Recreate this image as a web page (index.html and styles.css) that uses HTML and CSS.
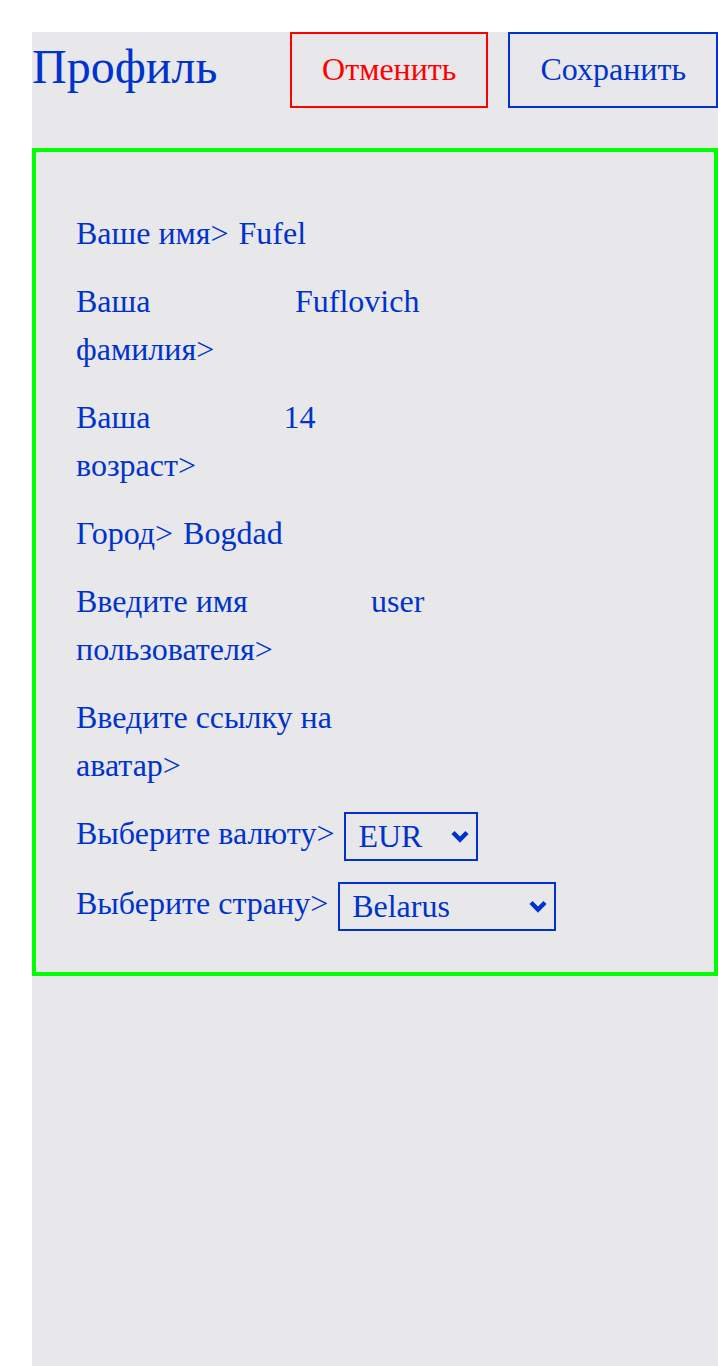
FILE: index.html
```html
<!DOCTYPE html>
<html lang="ru">
<head>
<meta charset="utf-8">
<title>Профиль</title>
<link rel="stylesheet" href="styles.css">
</head>
<body>
<div class="page">
  <header class="header">
    <h1 class="title">Профиль</h1>
    <div class="actions">
      <button class="btn btn-cancel" type="button">Отменить</button>
      <button class="btn btn-save" type="button">Сохранить</button>
    </div>
  </header>
  <form class="profile">
    <div class="row"><span class="label">Ваше имя&gt;</span><span class="value">Fufel</span></div>
    <div class="row"><span class="label">Ваша фамилия&gt;</span><span class="value">Fuflovich</span></div>
    <div class="row"><span class="label">Ваша возраст&gt;</span><span class="value">14</span></div>
    <div class="row"><span class="label">Город&gt;</span><span class="value">Bogdad</span></div>
    <div class="row"><span class="label">Введите имя пользователя&gt;</span><span class="value">user</span></div>
    <div class="row"><span class="label">Введите ссылку на аватар&gt;</span><span class="value"></span></div>
    <div class="row"><span class="label">Выберите валюту&gt;</span>
      <span class="select-wrap">
        <select class="select select-currency">
          <option>EUR</option>
          <option>USD</option>
          <option>RUB</option>
        </select>
        <svg class="chevron" viewBox="0 0 18 13" width="18" height="13" aria-hidden="true"><polyline points="2,2.5 9,9.5 16,2.5" fill="none" stroke="currentColor" stroke-width="4.5"/></svg>
      </span>
    </div>
    <div class="row row-last"><span class="label">Выберите страну&gt;</span>
      <span class="select-wrap">
        <select class="select select-country">
          <option>Belarus</option>
          <option>Russia</option>
          <option>Ukraine</option>
        </select>
        <svg class="chevron" viewBox="0 0 18 13" width="18" height="13" aria-hidden="true"><polyline points="2,2.5 9,9.5 16,2.5" fill="none" stroke="currentColor" stroke-width="4.5"/></svg>
      </span>
    </div>
  </form>
</div>
</body>
</html>
```
FILE: styles.css
```css
html, body {
  margin: 0;
  padding: 0;
  background: #ffffff;
}

body {
  font-family: "Liberation Serif", "Times New Roman", serif;
  color: #0033cc;
}

.page {
  margin: 32px 0 0 32px;
  background: #e8e8eb;
  min-height: calc(100vh - 32px);
}

.header {
  display: flex;
  justify-content: space-between;
  align-items: flex-start;
  margin-bottom: 40px;
}

.title {
  margin: 0;
  padding-top: 7px;
  font-size: 48px;
  font-weight: normal;
  line-height: normal;
  color: #0033cc;
}

.actions {
  display: flex;
  gap: 20px;
}

.btn {
  font-family: "Liberation Serif", "Times New Roman", serif;
  font-size: 32px;
  line-height: 38px;
  padding: 16px 30px 18px;
  background: transparent;
  border: 2px solid;
  border-radius: 0;
  margin: 0;
}

.btn-cancel {
  color: #ff0000;
  border-color: #ff0000;
}

.btn-save {
  color: #0033cc;
  border-color: #0033cc;
}

.profile {
  border: 4px solid #00ff00;
  padding: 57px 40px 44px;
  display: flex;
  flex-direction: column;
  gap: 20px;
  font-size: 32px;
  line-height: 48px;
}

.row {
  display: flex;
  align-items: flex-start;
  gap: 10px;
}

.row-last {
  margin-top: 1px;
}

.label {
  flex: 0 1 auto;
}

.value {
  flex: 0 1 400px;
}

.select-wrap {
  position: relative;
  display: block;
  flex: none;
  margin: 3px 0 -3px;
  height: 49px;
  color: #0033cc;
}

.select {
  display: block;
  appearance: none;
  -webkit-appearance: none;
  font-family: "Liberation Serif", "Times New Roman", serif;
  font-size: 32px;
  line-height: normal;
  color: #0033cc;
  background-color: transparent;
  border: 2px solid #0033cc;
  border-radius: 0;
  padding: 2px 36px 4px 12px;
  height: 49px;
  margin: 0;
}

.select-currency {
  width: 134px;
}

.select-country {
  width: 218px;
}

.chevron {
  position: absolute;
  right: 9px;
  top: 18px;
  pointer-events: none;
}
```
